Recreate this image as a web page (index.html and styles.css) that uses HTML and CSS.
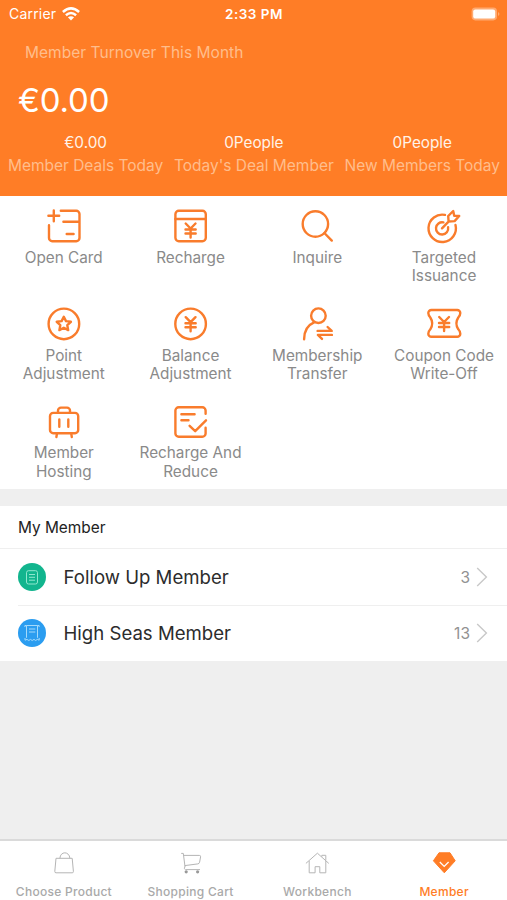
FILE: index.html
```html
<!DOCTYPE html>
<html lang="en">
<head>
<meta charset="utf-8">
<title>Member</title>
<link rel="stylesheet" href="styles.css">
</head>
<body>
<svg class="defs" aria-hidden="true"><defs><path id="yen" d="M-4.9 0L0 5L4.9 0M0 5V14M-5.1 6H5.1M-5.1 10H5.1"/></defs></svg>
<div class="app">
  <header class="hero">
    <div class="status">
      <div class="carrier"><span>Carrier</span>
        <svg width="18" height="14" viewBox="0 0 18 14" fill="none" stroke="#fff" stroke-width="2.5"><path d="M.9 5Q9-2.2 17.1 5M3.9 8.2Q9 3.8 14.1 8.2"/><path d="M9 13.4L5.9 10.3Q9 8 12.1 10.3Z" fill="#fff" stroke="none"/></svg>
      </div>
      <div class="clock">2:33 PM</div>
      <div class="battery"><svg width="31" height="14" viewBox="0 0 31 14"><rect x=".6" y=".6" width="25.4" height="12.8" rx="3.8" fill="#fff" opacity=".35"/><rect x="2.2" y="2.4" width="22" height="9.2" rx="2.2" fill="#fff"/><path d="M27.3 5q2 2 0 4z" fill="#fff" opacity=".5"/></svg></div>
    </div>
    <div class="turnover">Member Turnover This Month</div>
    <div class="amount">€0.00</div>
    <div class="stats">
      <div><b>€0.00</b><span>Member Deals Today</span></div>
      <div><b>0People</b><span>Today's Deal Member</span></div>
      <div><b>0People</b><span>New Members Today</span></div>
    </div>
  </header>

  <nav class="grid">
    <div class="cell"><svg class="icon" viewBox="0 0 36 36"><path d="M15.8 2.8H31.3a3.2 3.2 0 0 1 3.2 3.2V30a3.2 3.2 0 0 1-3.2 3.2H7.2A3.2 3.2 0 0 1 4 30V17.2M18.4 13.7H34.5M21.7 26H28.6M8.8 2.4V13.3M3.4 7.8H14.2"/></svg><span>Open Card</span></div>
    <div class="cell"><svg class="icon" viewBox="0 0 36 36"><rect x="3.4" y="2.8" width="30.4" height="30.4" rx="3.4"/><path d="M3.4 11H33.8"/><use href="#yen" x="18.6" y="15.5"/></svg><span>Recharge</span></div>
    <div class="cell"><svg class="icon" viewBox="0 0 36 36"><circle cx="16.4" cy="16" r="12.7"/><path d="M25.4 25L32.8 32.6"/></svg><span>Inquire</span></div>
    <div class="cell"><svg class="icon" viewBox="0 0 36 36"><path d="M19 6.9A13.7 13.7 0 1 0 29.5 17M17.4 14.4A6.1 6.1 0 1 0 22.1 19.3M16 20.3L23 13.2M22.6 13.5L22.2 8L27.2 3L28.2 7.8L33.2 8L28.6 13.1Z"/></svg><span>Targeted<br>Issuance</span></div>
    <div class="cell"><svg class="icon" viewBox="0 0 36 36"><circle cx="18.9" cy="17.9" r="15.3"/><path d="M18.8 10.7L21 15.1L25.9 15.8L22.3 19.2L23.2 24.1L18.8 21.8L14.4 24.1L15.3 19.2L11.7 15.8L16.6 15.1Z"/></svg><span>Point<br>Adjustment</span></div>
    <div class="cell"><svg class="icon" viewBox="0 0 36 36"><circle cx="18.6" cy="17.9" r="15.3"/><use href="#yen" x="18.6" y="11.2"/></svg><span>Balance<br>Adjustment</span></div>
    <div class="cell"><svg class="icon" viewBox="0 0 36 36"><circle cx="19.4" cy="9.7" r="7.3"/><path d="M5.1 33.3C5.1 25.5 9 19 15.5 16.2M18.6 24.9H32.7L28.6 21M32.9 28.9H18.9L23 32.9"/></svg><span>Membership<br>Transfer</span></div>
    <div class="cell"><svg class="icon" viewBox="0 0 36 36"><path d="M5.4 4H31.2a3.1 3.1 0 0 1 3.1 3.1Q34.3 9.3 32.3 11.5Q28.5 17.4 32.3 23.3Q34.3 25.5 34.3 27.7a3.1 3.1 0 0 1-3.1 3.1H5.4a3.1 3.1 0 0 1-3.1-3.1Q2.3 25.5 4.3 23.3Q8.1 17.4 4.3 11.5Q2.3 9.3 2.3 7.1A3.1 3.1 0 0 1 5.4 4Z"/><use href="#yen" x="18.1" y="11"/></svg><span>Coupon Code<br>Write-Off</span></div>
    <div class="cell"><svg class="icon" viewBox="0 0 36 36"><rect x="5" y="8.9" width="28.2" height="20.3" rx="3.2"/><path d="M13 8.9V6.6a3 3 0 0 1 3-3H22a3 3 0 0 1 3 3V8.9M14.3 15.5V22.7M23.3 15.5V22.7M12 29.4L11.4 33M26.2 29.4L26.8 33"/></svg><span>Member<br>Hosting</span></div>
    <div class="cell"><svg class="icon" viewBox="0 0 36 36"><path d="M33.6 9.8V6.6a3.3 3.3 0 0 0-3.3-3.3H6.7a3.3 3.3 0 0 0-3.3 3.3V29.4a3.3 3.3 0 0 0 3.3 3.3H30.3a3.3 3.3 0 0 0 3.3-3.3V23.8M9.4 10.2H22.6M9.4 16.2H16.5M17.6 21.8L23.2 27.2L34 16.3"/></svg><span>Recharge And<br>Reduce</span></div>
  </nav>

  <section class="list">
    <h2>My Member</h2>
    <div class="row"><svg class="badge" viewBox="0 0 28 28"><circle cx="14" cy="14" r="14" fill="#12b58e"/><g fill="none" stroke="#8fe8cf"><rect x="8.5" y="7.7" width="11" height="13.3" rx="2"/><path d="M11 11.5H17M11 14.3H17M11 17.2H17"/></g></svg><span class="name">Follow Up Member</span><span class="count">3</span><svg class="chev" viewBox="0 0 12 20"><path d="M1.2 1L10.4 10L1.2 19"/></svg></div>
    <div class="row"><svg class="badge" viewBox="0 0 28 28"><circle cx="14" cy="14" r="14" fill="#2b9df0"/><g fill="none" stroke="#a5dafb"><path d="M8.5 18.8V6.5H19.5V18.8M7 19V21.2L9 20.4L10.8 21.5L12.5 20.4L14.2 21.5L16 20.4L17.7 21.5L19.3 20.4L21.2 21.2V19M6.9 8V6.5H8.5M21.1 8V6.5H19.5M11 10H17.3M11 13H17.3"/></g></svg><span class="name">High Seas Member</span><span class="count">13</span><svg class="chev" viewBox="0 0 12 20"><path d="M1.2 1L10.4 10L1.2 19"/></svg></div>
  </section>

  <footer class="tabs">
    <div class="tab"><svg viewBox="0 0 24 24"><path d="M5 7.3H21.2L22.4 20.4Q22.5 21.8 21.2 21.8H5Q3.7 21.8 3.8 20.4ZM8.9 7.3C9.3 0 18.3 0 18.9 7.3"/></svg><span>Choose Product</span></div>
    <div class="tab"><svg viewBox="0 0 24 24"><path d="M3.2 2.4H5.3L7 15.6M5.5 4.4H21.3Q22.8 4.4 22.6 5.8L21.6 11.2Q21.3 12.7 19.8 12.9L6.8 14.6M7 15.2Q5.4 18.5 7.5 18.6H22"/><circle cx="8.2" cy="20.8" r="1.6" fill="#999" stroke="none"/><circle cx="19.6" cy="20.8" r="1.6" fill="#999" stroke="none"/></svg><span>Shopping Cart</span></div>
    <div class="tab"><svg viewBox="0 0 24 24"><path d="M.9 12.4L12.4 2.2L23.8 12.4M4.2 10V21.8H10.1V15.7H14.8V21.8H20.8V10M16.8 5.8V4.3H20.8V9.3"/></svg><span>Workbench</span></div>
    <div class="tab active"><svg viewBox="0 0 24 24"><path d="M7 1.8H18L23.2 9.8L12.3 21.8L1.4 9.8Z" fill="#ff7d26" stroke="#ff7d26" stroke-linejoin="round"/><path d="M7.8 11L12.2 15.4L16.6 11" stroke="#fff" stroke-width="1.3"/></svg><span>Member</span></div>
  </footer>
</div>
</body>
</html>
```

FILE: styles.css
```css
* { box-sizing: border-box; }
body {
  margin: 0;
  font-family: Inter, "Liberation Sans", sans-serif;
  background: #efefef;
}
.defs { display: none; }
.app { display: flex; flex-direction: column; width: 507px; height: 900px; overflow: hidden; white-space: nowrap; }

.hero { height: 196px; flex: none; background: #ff7d26; color: #fff; }
.status {
  display: grid;
  grid-template-columns: 1fr auto 1fr;
  align-items: center;
  height: 27px;
  padding: 0 5px 0 9px;
  font-size: 14px;
}
.carrier { display: flex; align-items: center; gap: 6px; letter-spacing: .2px; }
.clock { margin-right: 3px; font-weight: 600; font-size: 13.5px; letter-spacing: .5px; }
.battery { display: flex; justify-content: flex-end; }
.turnover { margin-top: 16px; padding-left: 25px; line-height: 20px; font-size: 15.5px; letter-spacing: .04px; color: #ffbd8c; }
.amount { padding-left: 18px; margin-top: 17px; line-height: 40px; font-size: 33px; letter-spacing: -.2px; }
.stats { display: flex; justify-content: space-between; margin-top: 11px; padding: 0 7px 0 8px; }
.stats div { display: flex; flex-direction: column; align-items: center; }
.stats b { font-weight: 400; font-size: 15.3px; line-height: 23px; color: #fff3e8; }
.stats span { font-size: 15.5px; line-height: 23px; letter-spacing: -.02px; color: #ffbd8c; }

.grid { display: grid; grid-template-columns: repeat(4, 1fr); grid-auto-rows: 97.75px; flex: none; background: #fff; }
.cell { display: flex; flex-direction: column; align-items: center; padding-top: 12px; text-align: center; color: #8a8a8a; font-size: 15.3px; line-height: 18.6px; }
.cell span { margin: 4.8px 0 0 .8px; }
.icon { width: 36px; height: 36px; flex: none; fill: none; stroke: #f97c2c; stroke-width: 2.4; stroke-linecap: round; stroke-linejoin: round; }

.list { margin-top: 16.75px; background: #fff; height: 155px; flex: none; }
.list h2 { margin: 0; height: 43px; padding-left: 18px; border-bottom: 1px solid #efefef; font-size: 15.4px; font-weight: 400; line-height: 44px; color: #222; }
.row { display: flex; align-items: center; height: 56px; margin-left: 18px; padding-right: 19px; }
.row + .row { border-top: 1px solid #efefef; height: 55.5px; }
.badge { width: 28px; height: 28px; }
.name { margin-left: 17.5px; flex: 1; font-size: 18.6px; color: #2c2c2c; }
.count { font-size: 15.5px; color: #929292; }
.chev { width: 12px; height: 20px; margin-left: 6px; fill: none; stroke: #c8c8c8; stroke-width: 1.4; }

.tabs { display: grid; grid-template-columns: repeat(4, 1fr); margin-top: auto; height: 61px; flex: none; border-top: 2px solid #dadada; background: #fff; }
.tab { display: flex; flex-direction: column; align-items: center; padding-top: 10px; font-size: 12px; font-weight: 500; letter-spacing: .28px; line-height: 16px; color: #a9a9a9; }
.tab span { margin-left: 1px; }
.tab svg { width: 24px; height: 24px; margin-bottom: 8.5px; fill: none; stroke: #b5b5b5; stroke-width: 1; }
.tab.active { color: #ff7d26; }
```
